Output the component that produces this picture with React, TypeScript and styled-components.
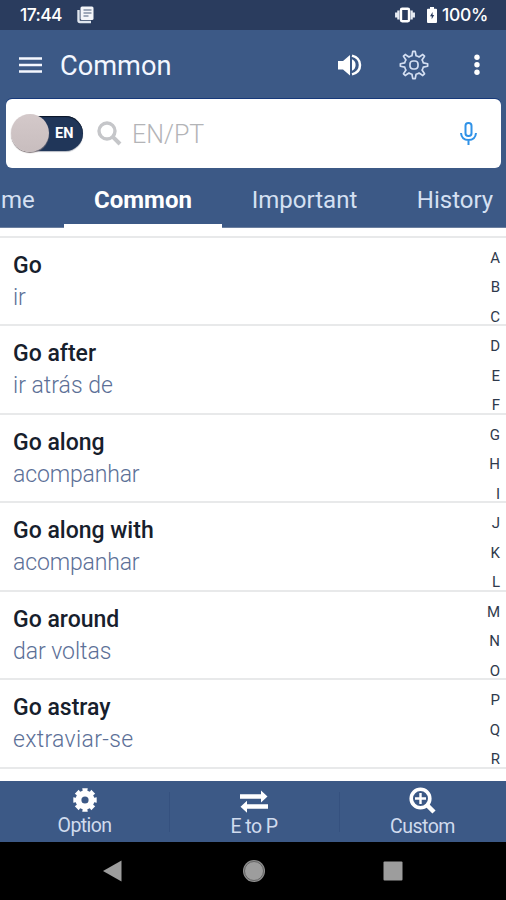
import React from "react";
import styled, { createGlobalStyle } from "styled-components";

const GlobalStyle = createGlobalStyle`
  * { box-sizing: border-box; }
  html, body { margin: 0; padding: 0; background: #fff; }
  body { overflow: hidden; font-family: Roboto, "Liberation Sans", sans-serif; }
  svg { display: block; flex: none; }
`;

const Screen = styled.div`
  width: 506px;
  height: 900px;
  display: flex;
  flex-direction: column;
  overflow: hidden;
  background: #fff;
`;

const StatusBar = styled.div`
  height: 30px;
  flex: none;
  display: flex;
  align-items: center;
  padding: 0 18px 0 20px;
  background: #2a3c5e;
  color: #fff;
`;

const StatusText = styled.span<{ $spacing: number }>`
  font: 500 17.5px/30px Inter, Roboto, sans-serif;
  letter-spacing: ${(p) => p.$spacing}px;
  white-space: nowrap;
`;

const Spacer = styled.div<{ $w?: number }>`
  flex: ${(p) => (p.$w ? `0 0 ${p.$w}px` : "1")};
`;

const Header = styled.header`
  height: 198px;
  flex: none;
  display: flex;
  flex-direction: column;
  background: #3c5986;
  border-bottom: 1px solid #6b7f9f;
`;

const AppBar = styled.div`
  height: 69px;
  flex: none;
  display: flex;
  align-items: center;
  padding: 0 25px 0 18px;
  color: #f3f7ff;
`;

const Title = styled.h1`
  margin: 2px 0 0 18px;
  font-size: 27.2px;
  line-height: 36px;
  font-weight: 400;
`;

const SearchCard = styled.div`
  height: 69px;
  flex: none;
  margin: 0 5px 0 6px;
  display: flex;
  align-items: center;
  padding: 0 24px 0 5px;
  border-radius: 6px;
  background: #fff;
  box-shadow: 0 -1px 0 #17397a;
`;

const Toggle = styled.div`
  width: 72px;
  height: 40px;
  margin-top: -1px;
  display: flex;
  align-items: center;
`;

const Track = styled.div`
  width: 68px;
  height: 35px;
  margin-left: 4px;
  border-radius: 18px;
  display: flex;
  align-items: center;
  background: #203659;
  box-shadow: inset 0 1px 1px #0b1525, 0 1px 1px #b4b9c2;
`;

const Knob = styled.div`
  width: 38px;
  height: 38px;
  flex: none;
  margin-left: -4px;
  border-radius: 50%;
  background: linear-gradient(#d4c9ca, #c8bdbe);
  box-shadow: 0 1px 1px #85797c;
`;

const ToggleText = styled.span`
  margin: 1px 0 0 6px;
  color: #fff;
  font-size: 14.5px;
  font-weight: 700;
`;

const Placeholder = styled.span`
  margin: 3px 0 0 10px;
  font-size: 25px;
  line-height: 32px;
  font-weight: 300;
  color: #b3b4b7;
`;

const Tabs = styled.nav`
  height: 60px;
  flex: none;
  display: flex;
  overflow: hidden;
`;

const Tab = styled.div<{ $w: number; $active?: boolean; $align?: string }>`
  width: ${(p) => p.$w}px;
  flex: none;
  padding: 15px 0 0 ${(p) => (p.$align ? 1 : 0)}px;
  text-align: ${(p) => p.$align || "center"};
  font-size: 24px;
  line-height: 34px;
  font-weight: ${(p) => (p.$active ? 700 : 400)};
  color: ${(p) => (p.$active ? "#fff" : "#d5e0f2")};
  border-bottom: 4px solid ${(p) => (p.$active ? "#fff" : "transparent")};
`;

const Content = styled.main`
  position: relative;
  height: 553px;
  flex: none;
  padding-top: 7.5px;
`;

const WordRow = styled.div`
  height: 88.6px;
  padding: 12px 0 0 13px;
  border-top: 2px solid #e8e9ea;
`;

const ListEnd = styled.div`
  height: 2px;
  background: #e8e9ea;
`;

const Word = styled.div`
  font-size: 23px;
  line-height: 32px;
  font-weight: 500;
  color: #17202c;
`;

const Meaning = styled.div<{ $spacing: number }>`
  font-size: 23px;
  line-height: 31px;
  font-weight: 300;
  letter-spacing: ${(p) => p.$spacing}px;
  color: #5c7097;
`;

const AlphaIndex = styled.div`
  position: absolute;
  top: 15px;
  right: 6px;
  display: grid;
  grid-auto-rows: 29.5px;
  justify-items: end;
  align-items: center;
  font-size: 15px;
  color: #2f3a4c;
`;

const ActionBar = styled.footer`
  height: 61px;
  flex: none;
  display: grid;
  grid-template-columns: 169px 170px 167px;
  background: #3c5986;
`;

const Action = styled.div<{ $first?: boolean; $drop?: number }>`
  display: flex;
  flex-direction: column;
  align-items: center;
  padding-top: ${(p) => 6 + (p.$drop || 0)}px;
  background: ${(p) => (p.$first ? "none" : "linear-gradient(#35517f, #35517f) 0 11px / 1px 40px no-repeat")};
`;

const ActionLabel = styled.span<{ $spacing: number }>`
  font-size: 19.5px;
  line-height: 25px;
  letter-spacing: ${(p) => p.$spacing}px;
  color: #d0dbee;
`;

const SystemNav = styled.div`
  height: 58px;
  flex: none;
  display: flex;
  align-items: center;
  padding-left: 103px;
  background: #000;
`;

const entries: [string, string, number][] = [
  ["Go", "ir", -0.1],
  ["Go after", "ir atrás de", 0],
  ["Go along", "acompanhar", -0.15],
  ["Go along with", "acompanhar", -0.15],
  ["Go around", "dar voltas", -0.05],
  ["Go astray", "extraviar-se", 0.33],
];

const gearPath = (teeth: number, outer: number, inner: number, tip: number, root: number) => {
  const step = (Math.PI * 2) / teeth;
  const pt = (r: number, a: number) => `${(r * Math.sin(a)).toFixed(2)} ${(-r * Math.cos(a)).toFixed(2)}`;
  let d = "";
  for (let i = 0; i < teeth; i++) {
    const a = i * step;
    d += `${i ? "L" : "M"}${pt(inner, a - root)}L${pt(outer, a - tip)}L${pt(outer, a + tip)}L${pt(inner, a + root)}`;
    d += `A${inner} ${inner} 0 0 1 ${pt(inner, a + step - root)}`;
  }
  return d + "Z";
};

const NewsIcon = () => (
  <svg width="18" height="18" viewBox="0 0 18 18">
    <path d="M1.500 4v10.500q0 1.500 1.500 1.500H14" fill="none" stroke="#dfe5ee" strokeWidth="2.400" />
    <rect x="3.500" y="0.500" width="13" height="13.500" rx="1.500" fill="#f4f6fa" />
    <path d="M6.500 4h8M6.500 7h8M6.500 10h5" stroke="#4b5c7b" strokeWidth="1.200" />
  </svg>
);

const VibrateIcon = () => (
  <svg width="20" height="18" viewBox="0 0 20 18">
    <rect x="6" y="2.800" width="8" height="12.400" rx="1.200" fill="none" stroke="#fff" strokeWidth="2.400" />
    <path d="M3.400 4.500v9M16.600 4.500v9M1.200 6.500v5M18.800 6.500v5" stroke="#e6ebf3" strokeWidth="2.300" />
  </svg>
);

const BatteryIcon = () => (
  <svg width="10" height="16" viewBox="0 0 10 16">
    <path d="M3 0h4v1.800h2q1 0 1 1V15q0 1-1 1H1q-1 0-1-1V2.800q0-1 1-1h2z" fill="#fff" />
    <path d="M5.600 5 3 9.300h1.700v3l2.500-4.300H5.600z" fill="#2a3c5e" />
  </svg>
);

const MenuIcon = () => (
  <svg width="24" height="18" viewBox="0 0 24 18">
    <path d="M1 2.500h23M1 9h23M1 15.500h23" stroke="#f5f8ff" strokeWidth="2.700" />
  </svg>
);

const SpeakerIcon = () => (
  <svg width="24" height="24" viewBox="0 0 24 24">
    <path d="M0 8h5l7-6v20.500L5 16.500H0z" fill="#fff" />
    <path d="M14 6.300q3.600 1.700 3.600 5.700T14 17.700z" fill="#fff" />
    <path d="M14 2.600q8 2.200 8 9.400t-8 9.400" fill="none" stroke="#fff" strokeWidth="2.500" />
  </svg>
);

const GearOutline = () => (
  <svg width="30" height="30" viewBox="-15 -15 30 30" fill="none" stroke="#d3def1" strokeWidth="1.700" strokeLinejoin="round">
    <path d={gearPath(8, 13.700, 9.500, 0.090, 0.220)} />
    <rect x="-4" y="-4" width="8" height="8" rx="3" />
  </svg>
);

const MoreIcon = () => (
  <svg width="8" height="22" viewBox="0 0 8 22" fill="#fff">
    <circle cx="4" cy="3.300" r="2.700" />
    <circle cx="4" cy="10.800" r="2.700" />
    <circle cx="4" cy="18.300" r="2.700" />
  </svg>
);

const SearchIcon = () => (
  <svg width="25" height="25" viewBox="0 0 25 25" fill="none" stroke="#c5c6c9">
    <circle cx="10" cy="10" r="8" strokeWidth="3.400" />
    <path d="M15.800 15.800 23 23" strokeWidth="4" />
  </svg>
);

const MicIcon = () => (
  <svg width="17" height="24" viewBox="0 0 17 24" fill="none" stroke="#3092e7" strokeWidth="2">
    <rect x="5.500" y="1" width="6" height="13" rx="2.800" />
    <path d="M1 11q.6 7 7.500 7T16 11M8.500 18v5" />
  </svg>
);

const GearSolid = () => (
  <svg width="26" height="26" viewBox="-13 -13 26 26">
    <path
      d={gearPath(8, 12, 9.500, 0.230, 0.250) + "M-3.600 0A3.600 3.600 0 1 0 3.600 0A3.600 3.600 0 1 0 -3.600 0Z"}
      fill="#fff"
      fillRule="evenodd"
    />
  </svg>
);

const SwapIcon = () => (
  <svg width="28" height="24" viewBox="0 0 28 24" fill="#fff">
    <path d="M0 4.200h21V.5L27.500 6.500 21 12.500V8.700H0z" />
    <path d="M28 14.300H7V10.700L.5 16.700 7 22.700V18.800h21z" />
  </svg>
);

const ZoomInIcon = () => (
  <svg width="27" height="27" viewBox="0 0 27 27" fill="none" stroke="#fff">
    <circle cx="11.500" cy="11.500" r="9.300" strokeWidth="3.600" />
    <path d="M11.500 6v11M6 11.500h11" strokeWidth="2.400" />
    <path d="M18.500 18.500 25 25" strokeWidth="4.500" />
  </svg>
);

export default function App() {
  return (
    <>
      <GlobalStyle />
      <Screen>
        <StatusBar>
          <StatusText $spacing={-0.6}>17:44</StatusText>
          <Spacer $w={15} />
          <NewsIcon />
          <Spacer />
          <VibrateIcon />
          <Spacer $w={12} />
          <BatteryIcon />
          <Spacer $w={5} />
          <StatusText $spacing={-0.3}>100%</StatusText>
        </StatusBar>
        <Header>
          <AppBar>
            <MenuIcon />
            <Title>Common</Title>
            <Spacer />
            <SpeakerIcon />
            <Spacer $w={37} />
            <GearOutline />
            <Spacer $w={44} />
            <MoreIcon />
          </AppBar>
          <SearchCard>
            <Toggle>
              <Track>
                <Knob />
                <ToggleText>EN</ToggleText>
              </Track>
            </Toggle>
            <Spacer $w={14} />
            <SearchIcon />
            <Placeholder>EN/PT</Placeholder>
            <Spacer />
            <MicIcon />
          </SearchCard>
          <Tabs>
            <Tab $w={64} $align="left">me</Tab>
            <Tab $w={158} $active>Common</Tab>
            <Tab $w={165}>Important</Tab>
            <Tab $w={136}>History</Tab>
          </Tabs>
        </Header>
        <Content>
          {entries.map(([word, meaning, spacing]) => (
            <WordRow key={word}>
              <Word>{word}</Word>
              <Meaning $spacing={spacing}>{meaning}</Meaning>
            </WordRow>
          ))}
          <ListEnd />
          <AlphaIndex>
            {"ABCDEFGHIJKLMNOPQR".split("").map((c) => (
              <span key={c}>{c}</span>
            ))}
          </AlphaIndex>
        </Content>
        <ActionBar>
          <Action $first>
            <GearSolid />
            <ActionLabel $spacing={-0.6}>Option</ActionLabel>
          </Action>
          <Action $drop={3}>
            <SwapIcon />
            <ActionLabel $spacing={-0.6}>E to P</ActionLabel>
          </Action>
          <Action>
            <ZoomInIcon />
            <ActionLabel $spacing={-0.5}>Custom</ActionLabel>
          </Action>
        </ActionBar>
        <SystemNav>
          <svg width="19" height="22" viewBox="0 0 19 22">
            <path d="M0 11 18.500 .5v21z" fill="#9d9d9d" />
          </svg>
          <Spacer $w={120} />
          <svg width="24" height="24" viewBox="0 0 24 24">
            <circle cx="12" cy="12" r="11" fill="#8f8f8f" />
            <circle cx="12" cy="12" r="9.500" fill="#9d9d9d" stroke="#555" strokeWidth=".8" />
          </svg>
          <Spacer $w={117} />
          <svg width="20" height="20" viewBox="0 0 20 20">
            <rect x=".5" y=".5" width="19" height="19" rx="1" fill="#9d9d9d" />
          </svg>
        </SystemNav>
      </Screen>
    </>
  );
}
